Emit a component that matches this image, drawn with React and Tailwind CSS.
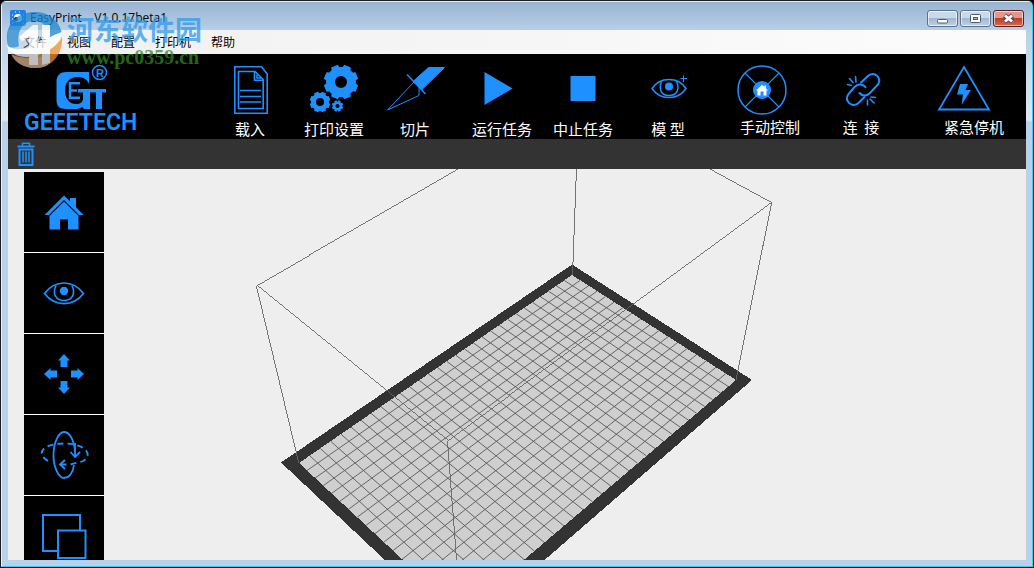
import React from "react";

const BLUE = "#1e90ff";
const CJK = "font-['Noto_Sans_CJK_SC',sans-serif]";

function gearPath(cx, cy, outer, inner, hole, teeth) {
  const pts = [];
  const step = (Math.PI * 2) / teeth;
  for (let i = 0; i < teeth; i++) {
    const a = i * step + step / 2;
    [
      [-0.36, inner],
      [-0.26, outer],
      [0.26, outer],
      [0.36, inner],
    ].forEach(([f, r]) => {
      pts.push(`${(cx + r * Math.cos(a + f * step)).toFixed(2)} ${(cy + r * Math.sin(a + f * step)).toFixed(2)}`);
    });
  }
  return `M${pts.join("L")}Z M${cx - hole} ${cy}a${hole} ${hole} 0 1 0 ${hole * 2} 0a${hole} ${hole} 0 1 0 ${-hole * 2} 0Z`;
}

const tools = [
  {
    label: "载入",
    box: "210 62 80 56",
    art: (
      <g fill="none" stroke={BLUE} strokeWidth="1.6">
        <path d="M234.8 66.8H261.5L267.2 74V113.2H234.8Z" />
        <path d="M238.5 71.5H255L263.2 79.5V108.5H238.5Z" />
        <path d="M254.5 71.5V80.2H263M257 74.5V78H261" />
        <path d="M240 90.5H261M240 96.5H261M240 102H261" />
      </g>
    ),
  },
  {
    label: "打印设置",
    box: "294 62 80 56",
    art: (
      <g fill={BLUE} fillRule="evenodd">
        <path d={gearPath(341, 82, 17.5, 15, 6, 8)} />
        <path d={gearPath(320, 102, 10.5, 9, 4, 8)} />
        <path d={gearPath(337.5, 106, 5.8, 4.6, 2, 8)} />
      </g>
    ),
  },
  {
    label: "切片",
    box: "375 62 80 56",
    art: (
      <g fill="none" stroke={BLUE}>
        <path d="M428.5 67.5H444.5L422 89.5L413.5 81Z" fill={BLUE} />
        <path d="M407 74.5L425.5 94" strokeWidth="1.4" />
        <path d="M414 82L387.5 110L419 95.5V87" strokeWidth="1" />
      </g>
    ),
  },
  {
    label: "运行任务",
    box: "462 62 80 56",
    art: <path d="M484.5 72V105L512.5 88.5Z" fill={BLUE} />,
  },
  {
    label: "中止任务",
    box: "543 62 80 56",
    art: <path d="M570.5 76H595.5V101H570.5Z" fill={BLUE} />,
  },
  {
    label: "模 型",
    box: "628 62 80 56",
    art: (
      <g fill="none" stroke={BLUE} strokeWidth="1.5">
        <path d="M652 88.5C660 76.5 678 76.5 686 88.5C678 100.5 660 100.5 652 88.5Z" />
        <path d="M661.5 81.5C658.5 89 661 95.5 669 95.5S680 89 676.5 81.5" />
        <circle cx="669" cy="86.5" r="4" fill={BLUE} stroke="none" />
        <path d="M683.5 75.5V82M680.5 78.5H687" strokeWidth="1" />
      </g>
    ),
  },
  {
    label: "手动控制",
    box: "730 62 80 54",
    raised: true,
    art: (
      <g fill="none" stroke={BLUE} strokeWidth="1.5">
        <circle cx="762" cy="90" r="24" />
        <path d="M745 73L779 107M779 73L745 107" strokeWidth="1.2" />
        <circle cx="762" cy="90" r="9" fill={BLUE} stroke="none" />
        <path
          d="M756 90.5L762 84.8L764.5 87V85.5H766V88.5L768 90.5H766.5V95.5H763.5V91.5H760.5V95.5H757.5V90.5Z"
          fill="#fff"
          stroke="none"
        />
      </g>
    ),
  },
  {
    label: "连  接",
    box: "821 62 80 54",
    raised: true,
    art: (
      <g fill="none" stroke={BLUE} strokeWidth="2" strokeLinecap="round">
        <path d="M861 82.5L868.5 75.5C875 71 882 78 878 84.5L869.5 93.5C866 96.5 862 96 859.5 93" />
        <path d="M865.5 87C862 83.5 857.5 84 854.5 87L848.5 94C844 100.5 851 108 858 103.5L864.5 97" />
        <path
          d="M856 82L855.5 76.5M853 82.5L849.5 78.5M851.5 85.5L847.5 84.5M867.5 100V105M870 99L874 103M871 97L875.5 97.5"
          strokeWidth="1.6"
        />
      </g>
    ),
  },
  {
    label: "紧急停机",
    box: "934 62 80 54",
    raised: true,
    art: (
      <g>
        <path d="M964 67L989 109.5H939Z" fill="none" stroke={BLUE} strokeWidth="1.8" />
        <path d="M960 84H968L965.5 90H971L961.5 105L963 94.5H957Z" fill={BLUE} />
      </g>
    ),
  },
];

const views = [
  {
    label: "Home view",
    art: (
      <g fill={BLUE}>
        <path d="M20.5 43L40 23.5L46 29.3V26H52V35.3L59.5 43H55L40 28L25 43Z" />
        <path d="M25.5 44L40 29.5L54.5 44V57.5H44V47.5H36V57.5H25.5Z" />
      </g>
    ),
  },
  {
    label: "Show",
    art: (
      <g fill="none" stroke={BLUE} strokeWidth="1.7">
        <path d="M20.5 40.5C31 26.5 49 26.5 59.5 40.5C49 54 31 54 20.5 40.5Z" />
        <path d="M32 32.5C28 41 32 47.5 40 47.5S52 41 48 32.5" />
        <circle cx="40" cy="38" r="4.2" fill={BLUE} stroke="none" />
      </g>
    ),
  },
  {
    label: "Move",
    art: (
      <g fill={BLUE}>
        {["", "rotate(90 40 40)", "rotate(180 40 40)", "rotate(270 40 40)"].map((t) => (
          <path key={t} transform={t} d="M40 20L46 26.5H43.5V33H36.5V26.5H34Z" />
        ))}
      </g>
    ),
  },
  {
    label: "Rotate",
    art: (
      <g fill="none" stroke={BLUE} strokeWidth="1.8">
        <path d="M51 36C50 24 45 17 40 17S29.5 27 29.5 40S35 63 40 63S49 58 50 50" />
        <path d="M51 28V41.5M46.5 37L51 42L56 37" />
        <path d="M24 46C12 39 17 29 40 28.5C63 29 70 41 58 46.5L46 49.5" strokeDasharray="6 4" />
        <path d="M42.5 49.5H36M41 45L36 49.5L41 54" />
      </g>
    ),
  },
  {
    label: "Scale",
    art: (
      <g fill="#000" stroke={BLUE} strokeWidth="2">
        <path d="M19 19H56V55H19Z" />
        <path d="M34 34.5H61.5V62H34Z" />
      </g>
    ),
  },
];

// Projects plate coordinates (0..1 on both sides) to the viewport.
function project(u, v) {
  const w = 0.1785 * u - 0.115 * v + 1;
  return [(375.1 * u + 108.6 * v + 299) / w, (-138.9 * u + 80 * v + 463) / w];
}

function line(u1, v1, u2, v2) {
  const [x1, y1] = project(u1, v1);
  const [x2, y2] = project(u2, v2);
  return `M${x1.toFixed(1)} ${y1.toFixed(1)}L${x2.toFixed(1)} ${y2.toFixed(1)}`;
}

const COLS = 30;
const ROWS = 18;

function PrintBed() {
  const grid = [];
  for (let i = 1; i < COLS; i++) grid.push(line(i / COLS, 0, i / COLS, 1));
  for (let j = 1; j < ROWS; j++) grid.push(line(0, j / ROWS, 1, j / ROWS));
  return (
    <svg
      className="block h-full min-w-0 flex-1"
      viewBox="104 169 922 391"
      preserveAspectRatio="xMidYMin slice"
      role="img"
      aria-label="Print bed"
    >
      <path d="M572 264.5L752 380L461.6 632L281 462.5Z" fill="#333" shapeRendering="crispEdges" />
      <path d="M572 275L736 380L460.6 613.6L299 463Z" fill="#cfcfcf" shapeRendering="crispEdges" />
      <path d={grid.join("")} stroke="#585858" strokeWidth="0.9" fill="none" />
      <path
        d="M459 168.5L256.5 285.5L447.5 440.5L771.5 202.5L709 168.5M256.5 285.5L299 463M447.5 440.5L460.6 613M771.5 202.5L736 380M576.5 168L572.5 275"
        stroke="#666"
        strokeWidth="0.9"
        fill="none"
        shapeRendering="crispEdges"
      />
    </svg>
  );
}

function Brand() {
  return (
    <div className="flex w-[202px] shrink-0 flex-col pl-4 pt-2">
      <svg className="h-12 w-28" viewBox="24 62 112 48" aria-label="Geeetech">
        <path
          d="M89 72V84C87 79 83 77 78 77C69 77 65 83 65 90.5S69 104 76 104C80 104 83 102 83 99V92.5H78V89H106V92.5H102V109H96V92.5H90V109H84L82 107C80 108.5 78 109 75 109H66C59 109 56.5 106 56.5 100V82C56.5 75 60 72 67 72Z"
          fill={BLUE}
        />
        <path d="M80 83.2H70V97.8H80M70 90.5H77" fill="none" stroke={BLUE} strokeWidth="2.5" />
        <circle cx="99.5" cy="72.5" r="7" fill="none" stroke={BLUE} strokeWidth="1.5" />
        <text x="96" y="76.5" fontSize="11" fontWeight="700" fill={BLUE} fontFamily="Liberation Sans, sans-serif">
          R
        </text>
      </svg>
      <span className="font-['Roboto',sans-serif] text-[23px] font-semibold leading-[26px] text-[#1e90ff]">GEEETECH</span>
    </div>
  );
}

function Watermark() {
  return (
    <div className="pointer-events-none absolute left-1 top-2 flex gap-1 opacity-75" aria-hidden="true">
      <svg className="h-[60px] w-[58px] shrink-0" viewBox="4 8 58 60">
        <circle cx="34" cy="39" r="27" fill="#8fb4d0" opacity="0.5" />
        <path
          d="M7 45C2 25 15 11 34 11C49 11 59 21 61 33C54 36 50 38 46 40C50 28 43 20 33 20C22 20 15 30 18 45C14 47 10 47 7 45Z"
          fill="#1c86d0"
        />
        <path d="M61 36C62 54 50 67 34 67C23 67 14 61 10 53C18 57 26 57 30 56C42 54 55 46 61 36Z" fill="#f09030" />
        <path d="M11 54C14 62 24 67 34 67C40 67 44 66 47 64V54C36 58 22 59 11 54Z" fill="#d9b08c" />
        <path d="M5 43C10 50 24 50 36 43C46 38 54 33 61 31C62 40 52 48 40 53C25 59 9 56 5 43Z" fill="#fff" />
        <path d="M18 36L32 24H37V64H28V36L21 40ZM41 24H49V62L41 64Z" fill="#fff" />
      </svg>
      <div className="flex flex-col whitespace-nowrap pt-[6px]">
        <span className="font-['Noto_Sans_CJK_SC',sans-serif] text-[27px] font-bold leading-7 text-[#2e9bea]">河东软件园</span>
        <span className="pt-[2px] font-['Liberation_Serif',serif] text-[20px] font-bold leading-6 text-[#2d8a1f]">www.pc0359.cn</span>
      </div>
    </div>
  );
}

const caption =
  "flex h-[17px] w-[31px] items-center justify-center rounded-[3px] border shadow-[inset_0_0_0_1px_rgba(255,255,255,0.6)]";
const plain = "border-[#5d7188] bg-[linear-gradient(#c8d9ea_50%,#9fb8d2_50%,#bdd2e6)]";

export default function App() {
  return (
    <div className="h-screen bg-black">
      <div className="relative flex h-full flex-col overflow-hidden rounded-t-md border border-[#1c1c1c] border-b-black bg-[#b9d1ea]">
        <div className="flex min-h-0 flex-1 flex-col border border-b-[#35d0e8] border-l-[#eaf3fb] border-r-[#35d0e8] border-t-[#d8f0fa] bg-[linear-gradient(to_bottom,#99b4d1_0px,#b9d1ea_30px,#dce9f6_118px,#b9d1ea_120px)] px-[6px] pb-[6px]">
          <header className="flex h-7 shrink-0 items-center">
            <svg className="ml-[2px] mt-1 h-4 w-4" viewBox="0 0 16 16" aria-hidden="true">
              <rect width="16" height="16" rx="2" fill="#1e80f0" />
              <path d="M2 5h1M2 9h1M2 13h1M13 5h1M13 9h1M13 13h1M5 2h1M9 2h1" stroke="#fff" />
              <circle cx="8" cy="8" r="4" fill="#fff" />
              <circle cx="6" cy="9" r="2" fill="#123" />
            </svg>
            <h1 className="ml-1 mt-1 whitespace-pre font-['Open_Sans',sans-serif] text-xs text-black">{"EasyPrint    V1.0.17beta1"}</h1>
            <div className="ml-auto mr-[2px] mt-1 flex gap-[2px]">
              <button aria-label="Minimize" className={`${caption} ${plain}`}>
                <svg className="h-[13px] w-[13px]" viewBox="0 0 13 13">
                  <rect x="1.5" y="7.5" width="10" height="3.5" rx="1" fill="#fff" stroke="#4f5a68" />
                </svg>
              </button>
              <button aria-label="Maximize" className={`${caption} ${plain}`}>
                <svg className="h-[13px] w-[13px]" viewBox="0 0 13 13">
                  <rect x="1.5" y="2.5" width="10" height="8" rx="1" fill="#fff" stroke="#4f5a68" />
                  <rect x="4.5" y="5.5" width="4" height="2" fill="#a8c0d8" stroke="#4f5a68" />
                </svg>
              </button>
              <button aria-label="Close" className={`${caption} border-[#5b1f1f] bg-[linear-gradient(#e0988c_45%,#bf3d26_50%,#d4694f)]`}>
                <svg className="h-[13px] w-[13px]" viewBox="0 0 13 13">
                  <path d="M2.5 3.5L10.5 9.5M10.5 3.5L2.5 9.5" stroke="#4f4a58" strokeWidth="5" />
                  <path d="M3 3.5L10 9.5M10 3.5L3 9.5" stroke="#fff" strokeWidth="2.8" />
                </svg>
              </button>
            </div>
          </header>

          <nav className={`flex h-6 shrink-0 items-center gap-5 bg-[linear-gradient(to_right,#f0f0f0,#fcfcfc)] pl-[15px] text-xs text-black ${CJK}`}>
            {["文件", "视图", "配置", "打印机", "帮助"].map((m) => (
              <button key={m} className="whitespace-nowrap">
                {m}
              </button>
            ))}
          </nav>

          <div className="flex h-[85px] shrink-0 overflow-hidden bg-black">
            <Brand />
            <div className="grid grid-cols-[84px_81px_87px_81px_85px_102px_91px_113px_80px] items-start pt-2">
              {tools.map((t) => (
                <button key={t.label} className={`flex w-20 flex-col items-center whitespace-pre text-[15px] leading-[22px] text-white ${CJK}`}>
                  <svg className={t.raised ? "h-[54px] w-20" : "h-14 w-20"} viewBox={t.box} aria-hidden="true">
                    {t.art}
                  </svg>
                  <span>{t.label}</span>
                </button>
              ))}
            </div>
          </div>

          <div className="flex h-[30px] shrink-0 items-center bg-[#333] pl-[9px]">
            <button aria-label="Delete">
              <svg className="h-6 w-[18px]" viewBox="0 0 18 24" fill="none" stroke={BLUE}>
                <path d="M0.5 4.5H17.5" strokeWidth="2" />
                <path d="M5.5 4V1.3H12.5V4" strokeWidth="1.6" />
                <path d="M2.5 7.5V23H15.5V7.5Z" strokeWidth="2" />
                <path d="M6 9.5V20.5M9 9.5V20.5M12 9.5V20.5" strokeWidth="1.5" />
              </svg>
            </button>
          </div>

          <main className="flex min-h-0 flex-1 overflow-hidden bg-[#eee]">
            <div className="flex w-24 shrink-0 flex-col pl-4 pt-[3px]">
              <div className="flex flex-col gap-px bg-white">
                {views.map((v) => (
                  <button key={v.label} aria-label={v.label} className="h-20 w-20 shrink-0 bg-black">
                    <svg className="h-20 w-20" viewBox="0 0 80 80">
                      {v.art}
                    </svg>
                  </button>
                ))}
              </div>
            </div>
            <PrintBed />
          </main>
        </div>
        <Watermark />
      </div>
    </div>
  );
}
